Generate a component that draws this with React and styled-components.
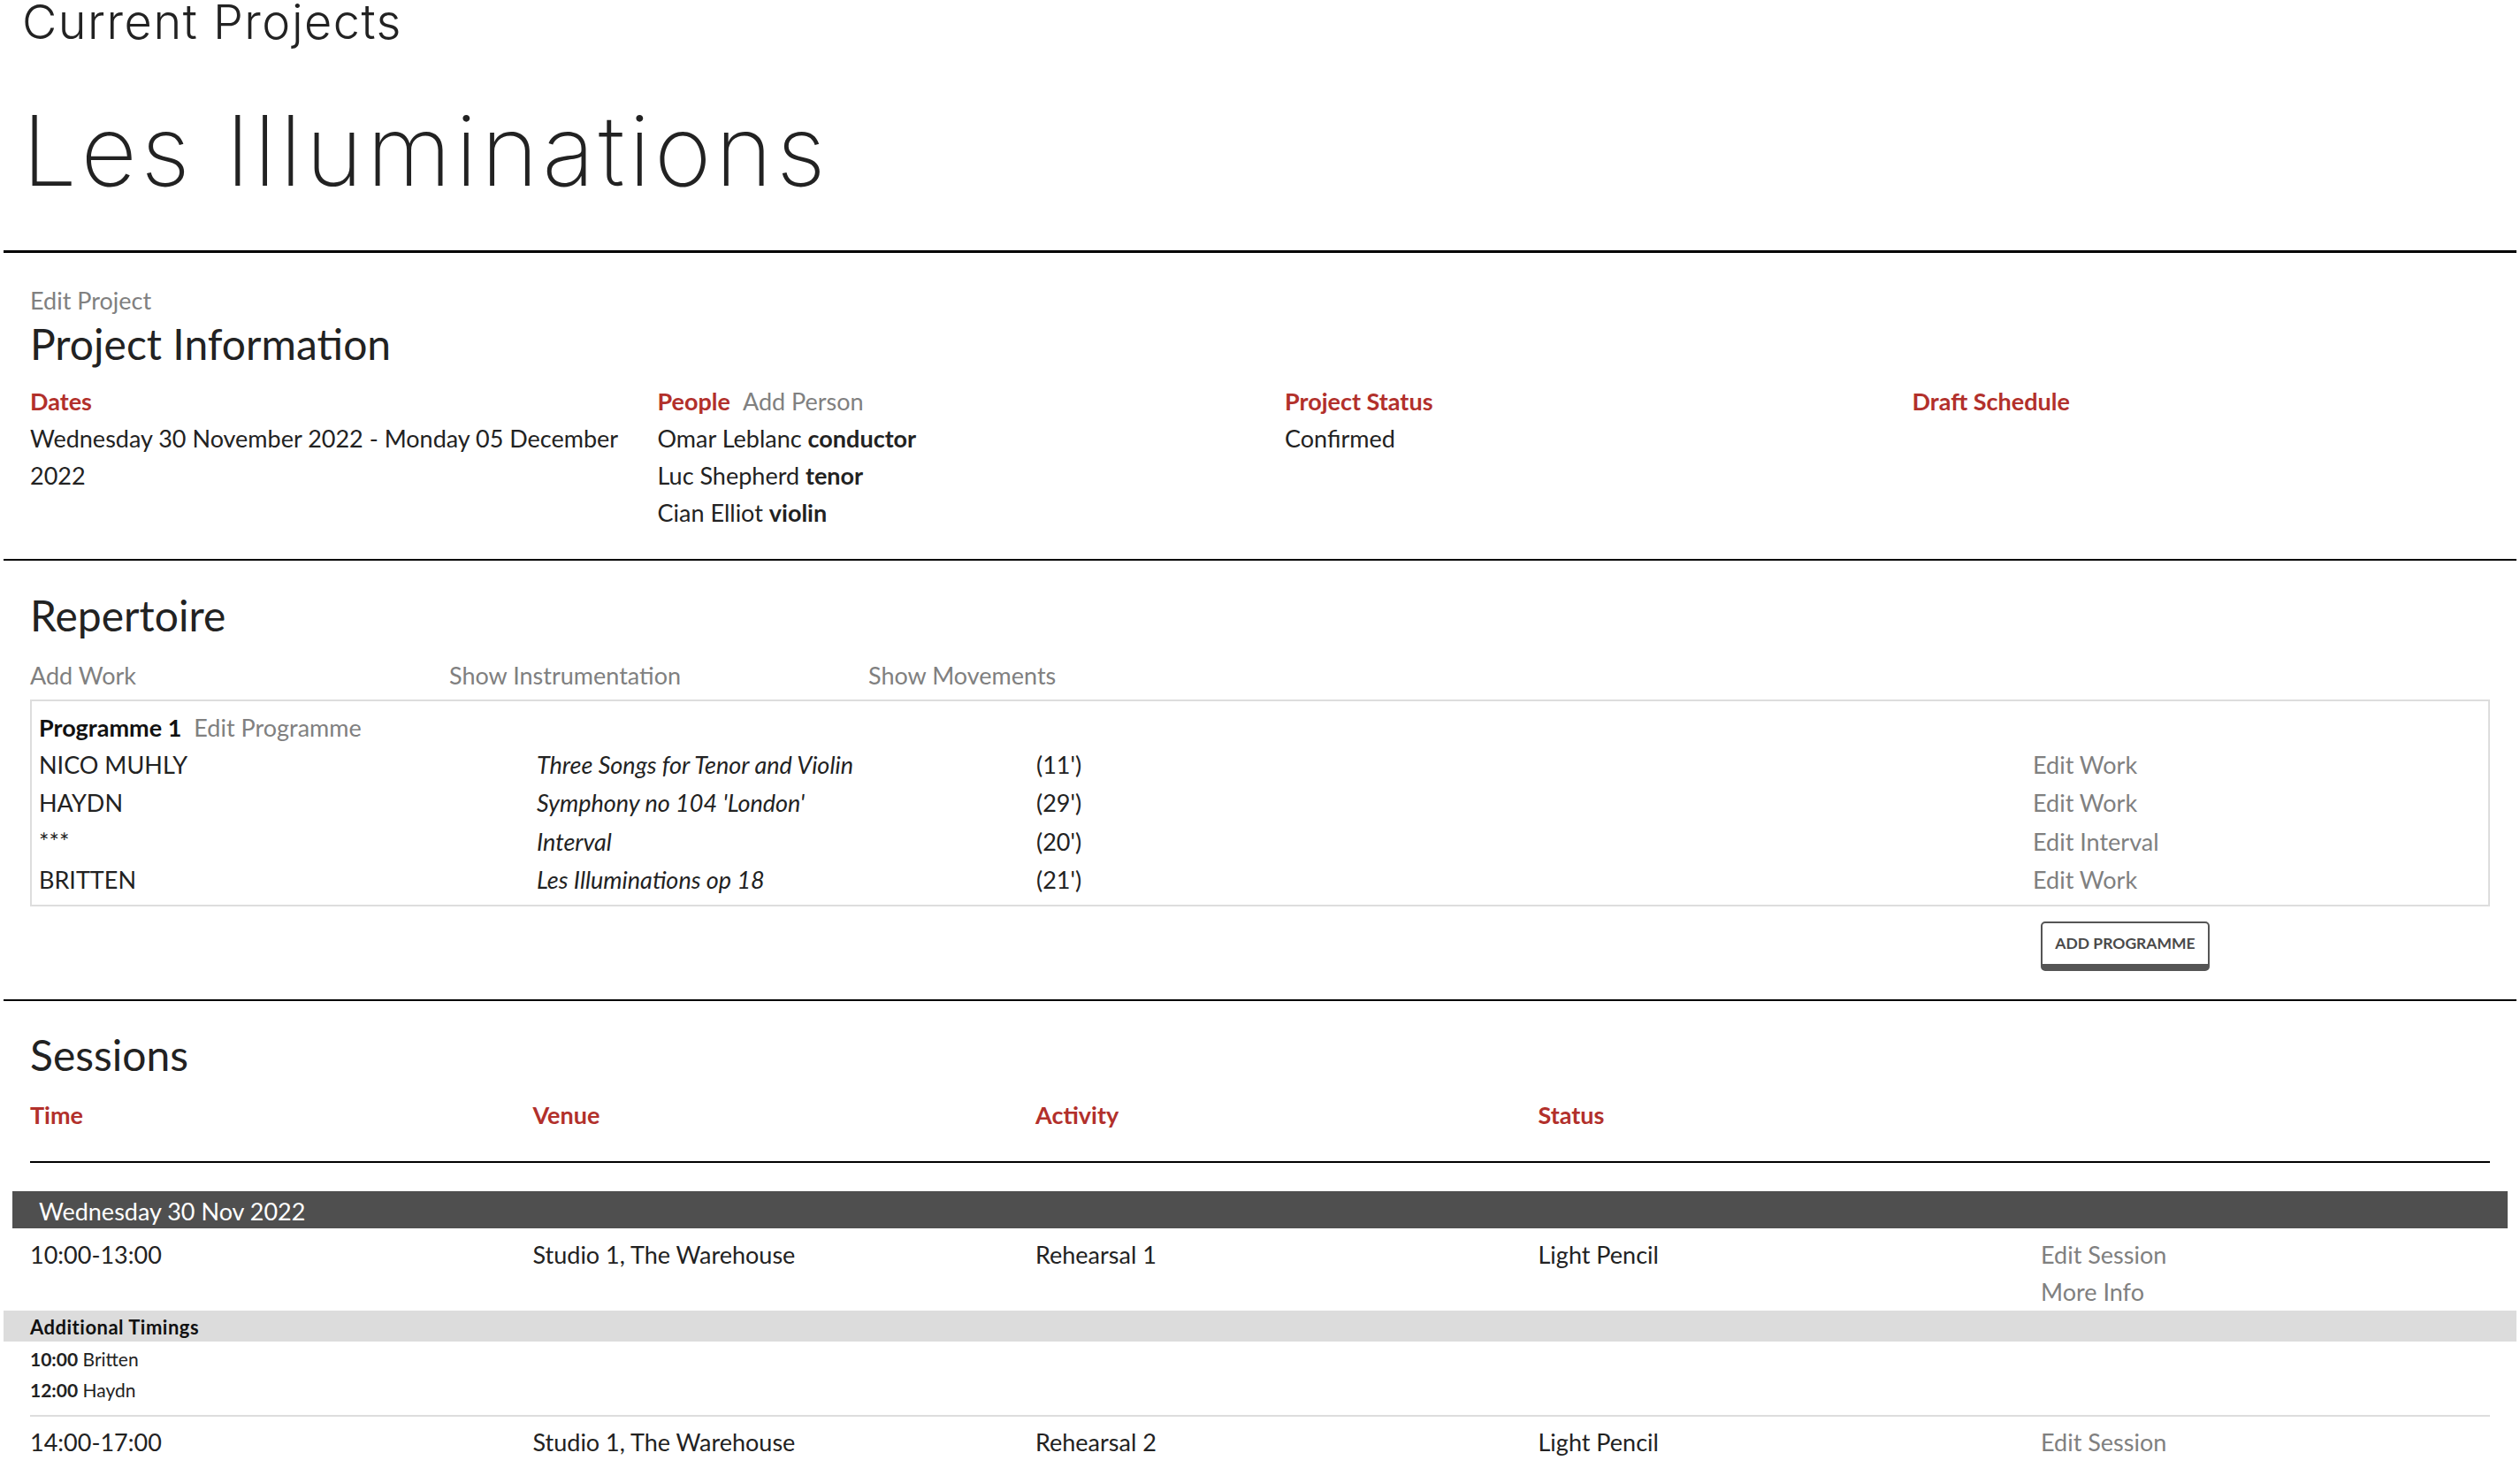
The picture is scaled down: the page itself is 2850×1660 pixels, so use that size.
import React from 'react';
import styled, { createGlobalStyle } from 'styled-components';

const RED = '#b2302b';
const GREY = '#808080';
const INK = '#222';

const GlobalStyle = createGlobalStyle`
  html, body {
    margin: 0;
    padding: 0;
    background: #fff;
  }
  body {
    font-family: Lato, 'Noto Sans', sans-serif;
    font-size: 27px;
    line-height: 42px;
    color: ${INK};
  }
  * { box-sizing: border-box; }
`;

const Page = styled.div`
  padding: 0 4px;
  overflow: hidden;
`;

const Header = styled.header`
  padding: 0 0 58px 21px;
  border-bottom: 3px solid #000;
`;

const Kicker = styled.div`
  font-family: Inter, Roboto, sans-serif;
  font-weight: 300;
  font-size: 54px;
  line-height: 50px;
  letter-spacing: 1.5px;
`;

const Title = styled.h1`
  margin: 65px 0 0;
  font-family: Inter, Roboto, sans-serif;
  font-weight: 200;
  font-size: 110px;
  line-height: 110px;
  letter-spacing: 4.5px;
`;

const Section = styled.section`
  padding: ${p => p.$pad || '34px 30px 32px'};
  border-bottom: 2px solid #000;
`;

const Link = styled.a`
  display: block;
  color: ${GREY};
  text-decoration: none;
  cursor: pointer;
`;

const InlineLink = styled.a`
  color: ${GREY};
  font-weight: 400;
  margin-left: 14px;
  cursor: pointer;
`;

const SectionTitle = styled.h2`
  margin: 0;
  font-size: 48px;
  line-height: 56px;
  font-weight: 400;
`;

const InfoGrid = styled.div`
  display: grid;
  grid-template-columns: repeat(3, 709.5px) 1fr;
  margin-top: 16px;
`;

const InfoCol = styled.div`
  padding-right: 20px;
`;

const Label = styled.div`
  color: ${RED};
  font-weight: 700;
`;

const Role = styled.b`
  font-weight: 700;
`;

const ActionRow = styled.div`
  display: grid;
  grid-template-columns: repeat(3, 474px);
  margin-top: 19px;
`;

const ProgrammeBox = styled.div`
  margin-top: 6px;
  border: 2px solid #ddd;
  padding: 9px 8px 5px;
`;

const ProgrammeName = styled.div`
  font-weight: 700;
  color: #111;
`;

const WorkRow = styled.div`
  display: grid;
  grid-template-columns: 563px 565px 1127px 1fr;
  height: 43.5px;
`;

const WorkTitle = styled.span`
  font-style: italic;
`;

const ButtonRow = styled.div`
  display: grid;
  grid-template-columns: repeat(4, 568.5px) 1fr;
  margin-top: 17px;
`;

const OutlineButton = styled.button`
  grid-column: 5;
  justify-self: start;
  width: 191px;
  height: 56px;
  border: 2px solid #555;
  border-bottom-width: 8px;
  border-radius: 5px;
  background: #fff;
  color: #4a4a4a;
  font-family: Lato, 'Noto Sans', sans-serif;
  font-weight: 700;
  font-size: 17.5px;
  padding: 0;
  cursor: pointer;
`;

const SessionGrid = styled.div`
  display: grid;
  grid-template-columns: repeat(4, 568.5px) 1fr;
`;

const SessionHead = styled(SessionGrid)`
  margin-top: 19px;
  color: ${RED};
  font-weight: 700;
  border-bottom: 2px solid #000;
  padding-bottom: 31px;
`;

const DayBar = styled.div`
  margin: 32px -20px 0;
  height: 42px;
  padding: 2px 0 0 30px;
  background: #4f4f4f;
  color: #fff;
  line-height: 42px;
`;

const SessionItem = styled.div`
  border-bottom: ${p => (p.$last ? 'none' : '2px solid #ddd')};
  padding-bottom: ${p => (p.$last ? '0' : '11.5px')};
`;

const SessionRow = styled(SessionGrid)`
  padding-top: ${p => p.$top || '9px'};
  min-height: ${p => p.$min || 'auto'};
`;

const Band = styled.div`
  margin: 0 -30px;
  padding: 2px 0 0 30px;
  height: 35px;
  background: #dcdcdc;
  font-size: 22px;
  line-height: 33px;
  font-weight: 700;
  letter-spacing: 0.5px;
  color: #111;
`;

const TimingLine = styled.div`
  font-size: 21px;
  line-height: 35px;
  color: #222;
  padding-top: ${p => (p.$first ? '2px' : '0')};
`;

const works = [
  { composer: 'NICO MUHLY', title: 'Three Songs for Tenor and Violin', dur: "(11')", edit: 'Edit Work' },
  { composer: 'HAYDN', title: "Symphony no 104 'London'", dur: "(29')", edit: 'Edit Work' },
  { composer: '***', title: 'Interval', dur: "(20')", edit: 'Edit Interval' },
  { composer: 'BRITTEN', title: 'Les Illuminations op 18', dur: "(21')", edit: 'Edit Work' },
];

const people = [
  { name: 'Omar Leblanc', role: 'conductor' },
  { name: 'Luc Shepherd', role: 'tenor' },
  { name: 'Cian Elliot', role: 'violin' },
];

const sessions = [
  {
    time: '10:00-13:00',
    venue: 'Studio 1, The Warehouse',
    activity: 'Rehearsal 1',
    status: 'Light Pencil',
    more: true,
    timings: [
      { at: '10:00', what: 'Britten' },
      { at: '12:00', what: 'Haydn' },
    ],
  },
  {
    time: '14:00-17:00',
    venue: 'Studio 1, The Warehouse',
    activity: 'Rehearsal 2',
    status: 'Light Pencil',
    more: true,
    timings: [],
  },
];

export default function App() {
  return (
    <Page>
      <GlobalStyle />
      <Header>
        <Kicker>Current Projects</Kicker>
        <Title>Les Illuminations</Title>
      </Header>

      <Section $pad="33px 30px 30.5px">
        <Link>Edit Project</Link>
        <SectionTitle>Project Information</SectionTitle>
        <InfoGrid>
          <InfoCol>
            <Label>Dates</Label>
            <div>Wednesday 30 November 2022 - Monday 05 December 2022</div>
          </InfoCol>
          <InfoCol>
            <Label>
              People<InlineLink>Add Person</InlineLink>
            </Label>
            {people.map(p => (
              <div key={p.name}>
                {p.name} <Role>{p.role}</Role>
              </div>
            ))}
          </InfoCol>
          <InfoCol>
            <Label>Project Status</Label>
            <div>Confirmed</div>
          </InfoCol>
          <InfoCol>
            <Label>Draft Schedule</Label>
          </InfoCol>
        </InfoGrid>
      </Section>

      <Section>
        <SectionTitle>Repertoire</SectionTitle>
        <ActionRow>
          <Link>Add Work</Link>
          <Link>Show Instrumentation</Link>
          <Link>Show Movements</Link>
        </ActionRow>
        <ProgrammeBox>
          <ProgrammeName>
            Programme 1<InlineLink>Edit Programme</InlineLink>
          </ProgrammeName>
          {works.map(w => (
            <WorkRow key={w.title}>
              <span>{w.composer}</span>
              <WorkTitle>{w.title}</WorkTitle>
              <span>{w.dur}</span>
              <Link>{w.edit}</Link>
            </WorkRow>
          ))}
        </ProgrammeBox>
        <ButtonRow>
          <OutlineButton>ADD PROGRAMME</OutlineButton>
        </ButtonRow>
      </Section>

      <Section $pad="33px 30px 0">
        <SectionTitle>Sessions</SectionTitle>
        <SessionHead>
          <span>Time</span>
          <span>Venue</span>
          <span>Activity</span>
          <span>Status</span>
        </SessionHead>
        <DayBar>Wednesday 30 Nov 2022</DayBar>
        {sessions.map((s, i) => (
          <SessionItem key={s.time} $last={i === sessions.length - 1}>
            <SessionRow $top={i === 0 ? '9px' : '8px'} $min={i === 0 ? '93px' : 'auto'}>
              <span>{s.time}</span>
              <span>{s.venue}</span>
              <span>{s.activity}</span>
              <span>{s.status}</span>
              <div>
                <Link>Edit Session</Link>
                {s.more && <Link>More Info</Link>}
              </div>
            </SessionRow>
            {s.timings.length > 0 && (
              <>
                <Band>Additional Timings</Band>
                {s.timings.map((t, k) => (
                  <TimingLine key={t.at} $first={k === 0}>
                    <b>{t.at}</b> {t.what}
                  </TimingLine>
                ))}
              </>
            )}
          </SessionItem>
        ))}
      </Section>
    </Page>
  );
}
